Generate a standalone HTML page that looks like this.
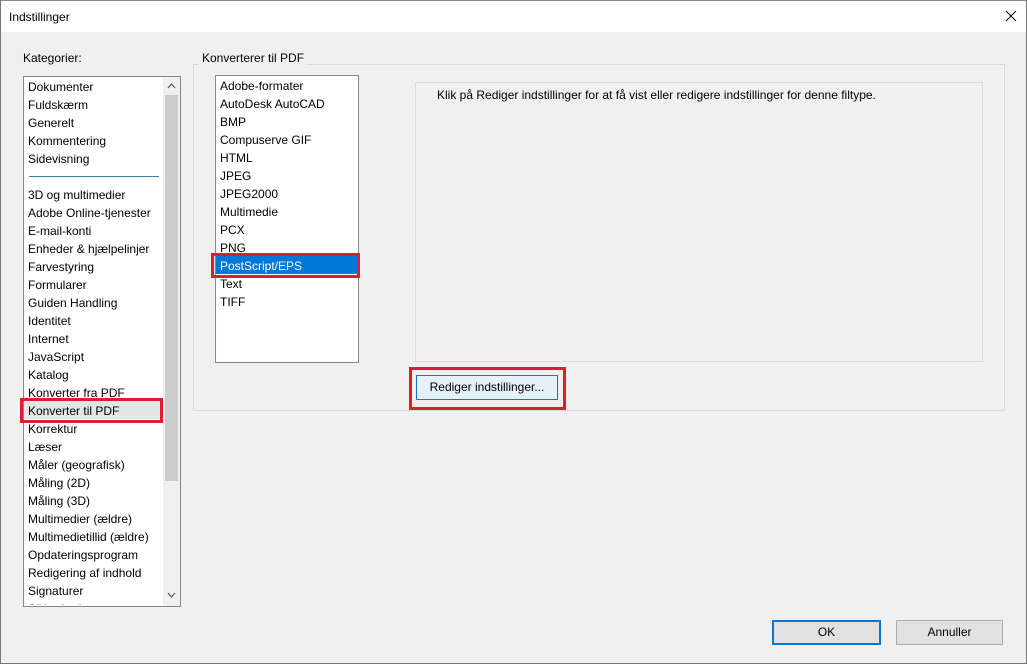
<!DOCTYPE html>
<html><head><meta charset="utf-8"><style>
*{box-sizing:border-box;margin:0;padding:0}
body{width:1027px;height:664px;overflow:hidden;background:#f0f0f0;font-family:"Liberation Sans",sans-serif;font-size:12px;color:#000;position:relative}
.abs{position:absolute}
.title{left:0;top:0;width:1027px;height:32px;background:#fff;border-top:1px solid #888}
.win{left:0;top:0;width:1027px;height:664px;border-left:1px solid #777;border-right:1px solid #777;border-bottom:1px solid #777}
.list{background:#fff;border:1px solid #828790}
.item{position:absolute;left:4px;height:18px;line-height:18px;white-space:nowrap}
.btn{border:1px solid #adadad;background:#e1e1e1;text-align:center;line-height:22px}
</style></head><body>
<div class="abs title"></div>
<div class="abs" style="left:9px;top:10px">Indstillinger</div>
<svg class="abs" style="left:1005px;top:10px" width="12" height="12"><path d="M1 1L11 11M11 1L1 11" stroke="#000" stroke-width="1"/></svg>

<div class="abs" style="left:23px;top:51px">Kategorier:</div>
<div class="abs list" style="left:23px;top:76px;width:158px;height:531px;overflow:hidden">
 <div class="abs" style="left:139px;top:0;width:17px;height:529px;background:#f0f0f0"></div>
 <div class="abs" style="left:141px;top:18px;width:13px;height:386px;background:#cdcdcd"></div>
 <svg class="abs" style="left:143px;top:6px" width="9" height="6"><path d="M1 5L4.5 1L8 5" stroke="#606060" fill="none" stroke-width="1.3"/></svg>
 <svg class="abs" style="left:143px;top:515px" width="9" height="6"><path d="M1 1L4.5 5L8 1" stroke="#606060" fill="none" stroke-width="1.3"/></svg>
 <div class="abs" style="left:5px;top:99px;width:130px;height:1px;background:#3c7fb1"></div>
</div>
<div class="abs" style="left:24px;top:78px;width:138px;height:527px;overflow:hidden">
 <div class="item" style="top:0">Dokumenter</div>
 <div class="item" style="top:18px">Fuldskærm</div>
 <div class="item" style="top:36px">Generelt</div>
 <div class="item" style="top:54px">Kommentering</div>
 <div class="item" style="top:72px">Sidevisning</div>
 <div class="item" style="top:108px">3D og multimedier</div>
 <div class="item" style="top:126px">Adobe Online-tjenester</div>
 <div class="item" style="top:144px">E-mail-konti</div>
 <div class="item" style="top:162px">Enheder &amp; hjælpelinjer</div>
 <div class="item" style="top:180px">Farvestyring</div>
 <div class="item" style="top:198px">Formularer</div>
 <div class="item" style="top:216px">Guiden Handling</div>
 <div class="item" style="top:234px">Identitet</div>
 <div class="item" style="top:252px">Internet</div>
 <div class="item" style="top:270px">JavaScript</div>
 <div class="item" style="top:288px">Katalog</div>
 <div class="item" style="top:306px">Konverter fra PDF</div>
 <div class="abs" style="left:0;top:323px;width:138px;height:18px;background:#e5e5e5"></div>
 <div class="item" style="top:324px">Konverter til PDF</div>
 <div class="item" style="top:342px">Korrektur</div>
 <div class="item" style="top:360px">Læser</div>
 <div class="item" style="top:378px">Måler (geografisk)</div>
 <div class="item" style="top:396px">Måling (2D)</div>
 <div class="item" style="top:414px">Måling (3D)</div>
 <div class="item" style="top:432px">Multimedier (ældre)</div>
 <div class="item" style="top:450px">Multimedietillid (ældre)</div>
 <div class="item" style="top:468px">Opdateringsprogram</div>
 <div class="item" style="top:486px">Redigering af indhold</div>
 <div class="item" style="top:504px">Signaturer</div>
 <div class="item" style="top:522px">Sikkerhed</div>
</div>
<div class="abs" style="left:20px;top:398px;width:143px;height:25px;border:3px solid #d9202c"></div>

<div class="abs" style="left:193px;top:64px;width:812px;height:347px;border:1px solid #dcdcdc"></div>
<div class="abs" style="left:199px;top:51px;background:#f0f0f0;padding:0 3px">Konverterer til PDF</div>

<div class="abs list" style="left:215px;top:75px;width:144px;height:288px"></div>
<div class="abs" style="left:216px;top:256px;width:142px;height:18px;background:#0078d7"></div>
<div class="abs" style="left:216px;top:77px;width:142px;height:280px">
 <div class="item" style="top:0px">Adobe-formater</div>
 <div class="item" style="top:18px">AutoDesk AutoCAD</div>
 <div class="item" style="top:36px">BMP</div>
 <div class="item" style="top:54px">Compuserve GIF</div>
 <div class="item" style="top:72px">HTML</div>
 <div class="item" style="top:90px">JPEG</div>
 <div class="item" style="top:108px">JPEG2000</div>
 <div class="item" style="top:126px">Multimedie</div>
 <div class="item" style="top:144px">PCX</div>
 <div class="item" style="top:162px">PNG</div>
 <div class="item" style="top:180px;color:#fff">PostScript/EPS</div>
 <div class="item" style="top:198px">Text</div>
 <div class="item" style="top:216px">TIFF</div>
</div>
<div class="abs" style="left:211px;top:253px;width:149px;height:25px;border:3px solid #d9202c"></div>

<div class="abs" style="left:415px;top:82px;width:568px;height:280px;border:1px solid #dcdcdc"></div>
<div class="abs" style="left:437px;top:88px">Klik på Rediger indstillinger for at få vist eller redigere indstillinger for denne filtype.</div>

<div class="abs btn" style="left:416px;top:375px;width:142px;height:25px;background:#e5f1fb;border-color:#0078d7">Rediger indstillinger...</div>
<div class="abs" style="left:409px;top:367px;width:157px;height:43px;border:3px solid #d9202c"></div>

<div class="abs btn" style="left:772px;top:620px;width:109px;height:25px;border:2px solid #0078d7;line-height:21px">OK</div>
<div class="abs btn" style="left:896px;top:620px;width:107px;height:25px">Annuller</div>
<div class="abs win"></div>
</body></html>
